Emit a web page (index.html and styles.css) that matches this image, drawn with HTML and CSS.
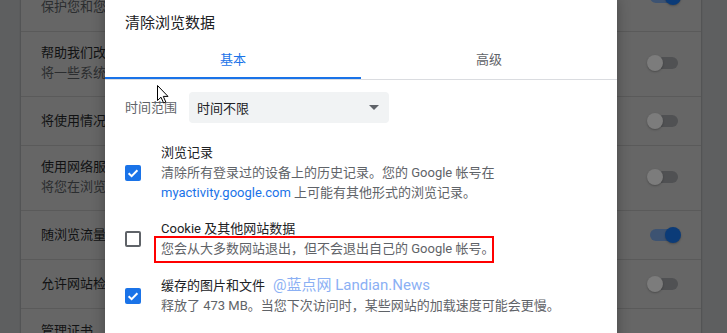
FILE: index.html
```html
<!DOCTYPE html>
<html lang="zh-CN">
<head>
<meta charset="utf-8">
<title>清除浏览数据</title>
<link rel="stylesheet" href="styles.css">
</head>
<body>
<div class="page">
  <div class="card">
    <div class="row tall">
      <div class="row-text">
        <div class="row-title">安全浏览</div>
        <div class="row-sub">保护您和您的设备不受危险网站的侵害</div>
      </div>
      <div class="toggle on"><span class="knob"></span></div>
    </div>
    <div class="row tall">
      <div class="row-text">
        <div class="row-title">帮助我们改进安全浏览功能</div>
        <div class="row-sub">将一些系统信息和网页内容发送给 Google</div>
      </div>
      <div class="toggle"><span class="knob"></span></div>
    </div>
    <div class="row">
      <div class="row-text">
        <div class="row-title">将使用情况统计信息和崩溃报告自动发送给 Google</div>
      </div>
      <div class="toggle"><span class="knob"></span></div>
    </div>
    <div class="row tall">
      <div class="row-text">
        <div class="row-title">使用网络服务帮助解决拼写错误</div>
        <div class="row-sub">将您在浏览器中输入的文字发送给 Google，以改进拼写检查功能</div>
      </div>
      <div class="toggle"><span class="knob"></span></div>
    </div>
    <div class="row">
      <div class="row-text">
        <div class="row-title">随浏览流量一起发送“不跟踪”请求</div>
      </div>
      <div class="toggle on"><span class="knob"></span></div>
    </div>
    <div class="row">
      <div class="row-text">
        <div class="row-title">允许网站检查您是否已保存付款方式</div>
      </div>
      <div class="toggle"><span class="knob"></span></div>
    </div>
    <div class="row last">
      <div class="row-text">
        <div class="row-title">管理证书</div>
      </div>
    </div>
  </div>
</div>

<div class="dialog">
  <div class="dlg-title">清除浏览数据</div>
  <div class="tabs">
    <div class="tab selected">基本</div>
    <div class="tab">高级</div>
  </div>
  <div class="range">
    <span class="range-label">时间范围</span>
    <div class="select">
      <span>时间不限</span>
      <span class="arrow"></span>
    </div>
  </div>
  <div class="items">
    <div class="item">
      <span class="cb checked">
        <svg viewBox="0 0 16 16" width="16" height="16"><polyline points="3.6,8.2 6.6,11.1 12.4,5.2" fill="none" stroke="#fff" stroke-width="2"/></svg>
      </span>
      <div class="item-text">
        <div class="t">浏览记录</div>
        <div class="d">清除所有登录过的设备上的历史记录。您的 Google 帐号在 <span class="link">myactivity.google.com</span> 上可能有其他形式的浏览记录。</div>
      </div>
    </div>
    <div class="item">
      <span class="cb"></span>
      <div class="item-text">
        <div class="t">Cookie 及其他网站数据</div>
        <div class="d marked">您会从大多数网站退出，但不会退出自己的 Google 帐号。<span class="annot"></span></div>
      </div>
    </div>
    <div class="item">
      <span class="cb checked">
        <svg viewBox="0 0 16 16" width="16" height="16"><polyline points="3.6,8.2 6.6,11.1 12.4,5.2" fill="none" stroke="#fff" stroke-width="2"/></svg>
      </span>
      <div class="item-text">
        <div class="t">缓存的图片和文件<span class="watermark">@蓝点网 Landian.News</span></div>
        <div class="d">释放了 473 MB。当您下次访问时，某些网站的加载速度可能会更慢。</div>
      </div>
    </div>
  </div>
</div>

<svg class="cursor" width="13" height="19" viewBox="0 0 13 19">
  <path d="M0.5,0.5 L0.5,15.5 L4,12.2 L6.6,18 L8.8,17 L6.3,11.4 L11,11.4 Z" fill="#fff" stroke="#000" stroke-width="1" stroke-linejoin="miter"/>
</svg>
</body>
</html>
```

FILE: styles.css
```css
html, body {
  margin: 0;
  padding: 0;
}
body {
  width: 727px;
  height: 333px;
  overflow: hidden;
  position: relative;
  background: #5e5f60;
  font-family: Roboto, "Noto Sans CJK SC", sans-serif;
  font-size: 13px;
}

/* dimmed settings page behind the dialog */
.page {
  padding-left: 21px;
  width: 680px;
}
.card {
  margin-top: -34px;
  background: #666666;
  box-shadow: 0 0 2px rgba(0, 0, 0, 0.35);
}
.row {
  box-sizing: border-box;
  height: 49px;
  border-top: 1px solid #5a5a5a;
  padding: 0 23px 0 20px;
  display: flex;
  align-items: center;
  justify-content: space-between;
}
.row:first-child {
  border-top: none;
}
.row.tall {
  height: 65px;
  padding-bottom: 3px;
}
.row.last {
  padding-bottom: 4px;
}
.row-text {
  line-height: 20px;
  white-space: nowrap;
}
.row-title {
  color: #111213;
}
.row-sub {
  color: #2b2d2f;
}
.toggle {
  position: relative;
  width: 28px;
  height: 12px;
  border-radius: 6px;
  background: #505153;
  flex: none;
}
.toggle .knob {
  position: absolute;
  left: -3px;
  top: -2px;
  width: 16px;
  height: 16px;
  border-radius: 50%;
  background: #7c7c7c;
  box-shadow: 0 1px 2px rgba(0, 0, 0, 0.25);
}
.toggle.on {
  background: #3d5372;
}
.toggle.on .knob {
  left: 15px;
  background: #0b3b78;
}

/* dialog */
.dialog {
  position: absolute;
  left: 105px;
  top: -8px;
  width: 512px;
  height: 360px;
  background: #ffffff;
  border-radius: 8px;
  box-shadow: 0 4px 14px rgba(0, 0, 0, 0.3);
  overflow: hidden;
}
.dlg-title {
  padding: 21px 20px 0;
  font-size: 15px;
  line-height: 20px;
  color: #202124;
}
.tabs {
  margin-top: 6px;
  display: flex;
  border-bottom: 1px solid #dadce0;
}
.tab {
  flex: 1;
  height: 40px;
  padding-bottom: 1px;
  box-sizing: border-box;
  display: flex;
  align-items: center;
  justify-content: center;
  color: #5f6368;
  position: relative;
}
.tab.selected {
  color: #1a73e8;
}
.tab.selected::after {
  content: "";
  position: absolute;
  left: 0;
  right: 0;
  bottom: 0;
  height: 2px;
  background: #1a73e8;
}
.range {
  margin-top: 12px;
  padding: 0 20px;
  display: flex;
  align-items: center;
  gap: 12px;
}
.range-label {
  color: #5f6368;
  line-height: 20px;
}
.select {
  width: 200px;
  height: 31px;
  box-sizing: border-box;
  background: #f1f3f4;
  border-radius: 4px;
  padding: 0 10px 0 8px;
  display: flex;
  align-items: center;
  justify-content: space-between;
  color: #202124;
}
.arrow {
  width: 0;
  height: 0;
  border-left: 5px solid transparent;
  border-right: 5px solid transparent;
  border-top: 5px solid #5f6368;
}
.items {
  margin-top: 12px;
  padding: 0 20px;
}
.item {
  display: flex;
  align-items: center;
  gap: 20px;
  padding: 8px 0;
}
.cb {
  flex: none;
  width: 16px;
  height: 16px;
  box-sizing: border-box;
  border: 2px solid #5f6368;
  border-radius: 2px;
  display: block;
}
.cb.checked {
  border: none;
  background: #1a73e8;
}
.cb svg {
  display: block;
}
.item-text {
  line-height: 20px;
}
.t {
  color: #202124;
}
.d {
  color: #5f6368;
}
.link {
  color: #1a73e8;
}
.marked {
  position: relative;
}
.annot {
  position: absolute;
  left: -7px;
  top: -3px;
  width: 340px;
  height: 27px;
  box-sizing: border-box;
  border: 2px solid #ff0000;
}
.watermark {
  margin-left: 8px;
  font-size: 15px;
  color: #8bb0f4;
}
.cursor {
  position: absolute;
  left: 157px;
  top: 85px;
}
```
